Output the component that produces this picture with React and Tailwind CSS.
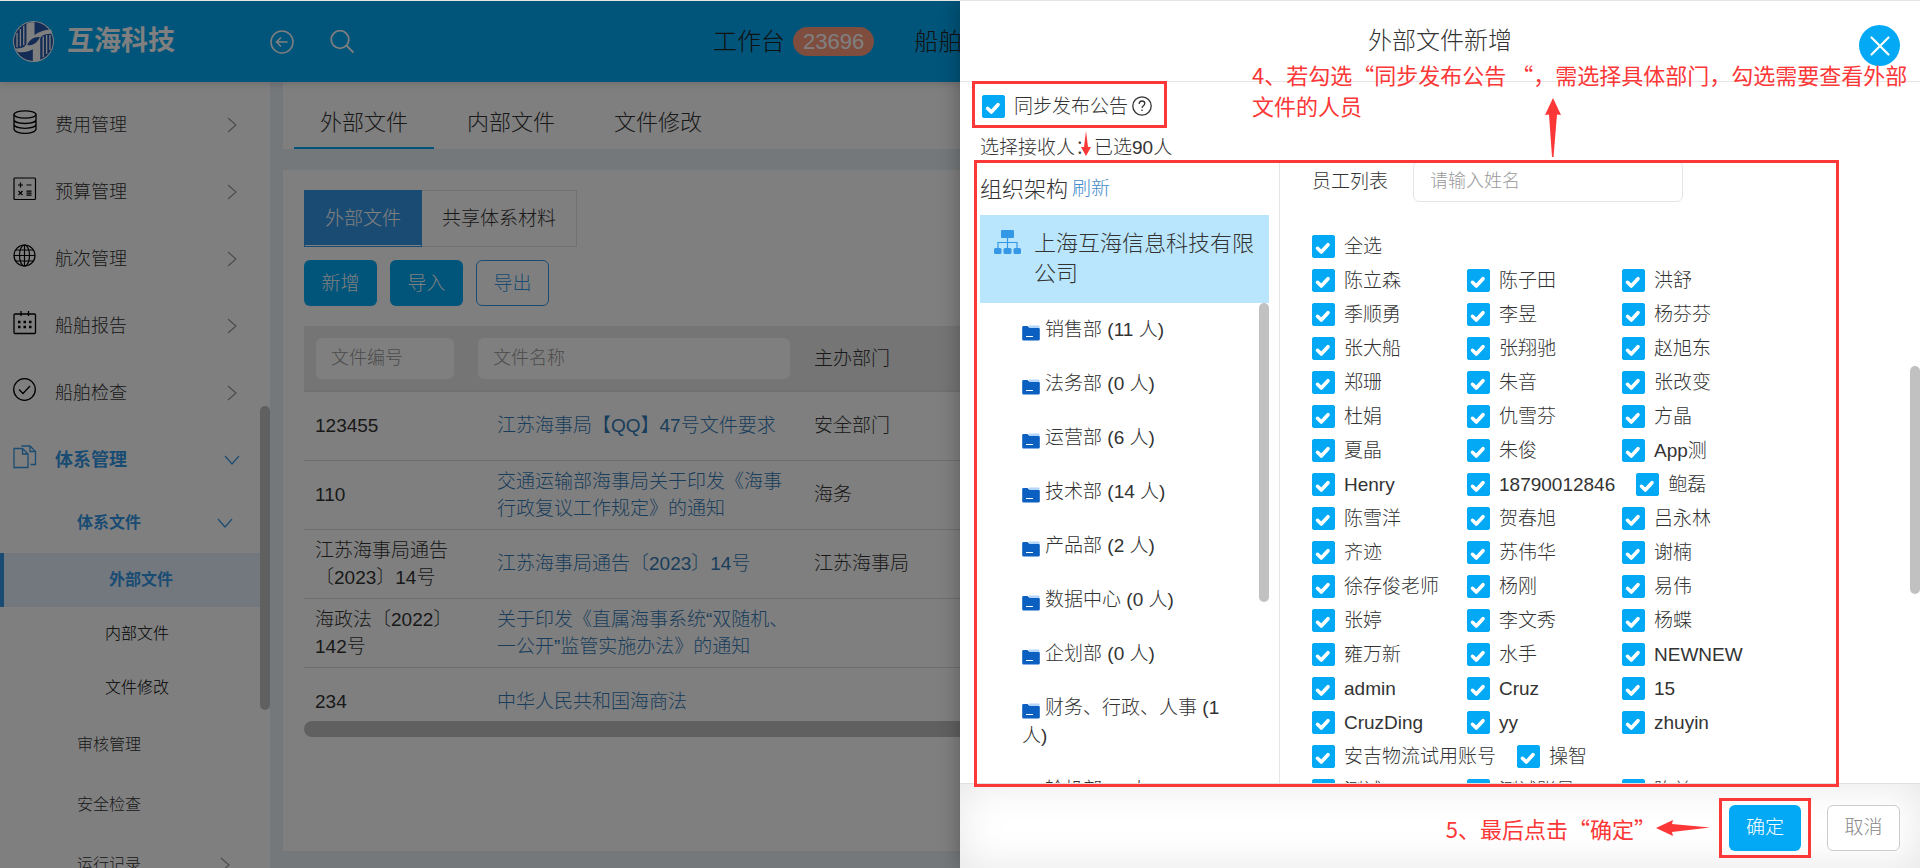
import { useState } from 'react';
import { X } from 'lucide-react';

const MENU = [
  { label: '费用管理', icon: DatabaseIcon },
  { label: '预算管理', icon: CalculatorIcon },
  { label: '航次管理', icon: GlobeIcon },
  { label: '船舶报告', icon: CalendarIcon },
  { label: '船舶检查', icon: CheckCircleIcon },
];

const FILES = [
  { no: '123455', name: '江苏海事局【QQ】47号文件要求', dept: '安全部门' },
  { no: '110', name: '交通运输部海事局关于印发《海事行政复议工作规定》的通知', dept: '海务' },
  { no: '江苏海事局通告〔2023〕14号', name: '江苏海事局通告〔2023〕14号', dept: '江苏海事局' },
  { no: '海政法〔2022〕142号', name: '关于印发《直属海事系统“双随机、一公开”监管实施办法》的通知', dept: '' },
  { no: '234', name: '中华人民共和国海商法', dept: '' },
];

const DEPARTMENTS = [
  { name: '销售部', count: 11 },
  { name: '法务部', count: 0 },
  { name: '运营部', count: 6 },
  { name: '技术部', count: 14 },
  { name: '产品部', count: 2 },
  { name: '数据中心', count: 0 },
  { name: '企划部', count: 0 },
  { name: '财务、行政、人事', count: 1 },
  { name: '轮机部', count: 0 },
];

const EMPLOYEES = [
  '陈立森', '陈子田', '洪舒',
  '季顺勇', '李昱', '杨芬芬',
  '张大船', '张翔驰', '赵旭东',
  '郑珊', '朱音', '张改变',
  '杜娟', '仇雪芬', '方晶',
  '夏晶', '朱俊', 'App测',
  'Henry', '18790012846', '鲍磊',
  '陈雪洋', '贺春旭', '吕永林',
  '齐迹', '苏伟华', '谢楠',
  '徐存俊老师', '杨刚', '易伟',
  '张婷', '李文秀', '杨蝶',
  '雍万新', '水手', 'NEWNEW',
  'admin', 'Cruz', '15',
  'CruzDing', 'yy', 'zhuyin',
  '安吉物流试用账号', '操智',
  '测试', '测试账号', '陈益',
];

function Logo() {
  return (
    <svg viewBox="0 0 122 122" className="size-[41px]">
      <circle cx="61" cy="61" r="61" fill="#fff" />
      <circle cx="61" cy="61" r="58" fill="#2458ac" />
      <path d="M40 8C50 3 58 3 64 4V42C78 32 92 26 114 26L117 38C98 38 84 42 81 52V118C74 120 66 120 59 119V84C46 92 30 94 14 92L6 82C24 82 38 78 40 66Z" fill="#fff" />
      <path d="M42 72C50 54 64 46 80 48C74 62 60 74 42 72Z" fill="#2458ac" />
      <path d="M32 14V72M22 24V76M12 36V78M90 46V108M100 42V98M110 42V86" stroke="#fff" strokeWidth="4" fill="none" />
    </svg>
  );
}

function DatabaseIcon() {
  return (
    <svg viewBox="0 0 24 24" className="size-6" fill="none" stroke="currentColor" strokeWidth="1.3">
      <ellipse cx="12" cy="4.5" rx="11" ry="3.7" />
      <path d="M1 4.500V19C1 21.500 6 23.300 12 23.300S23 21.500 23 19V4.500M1 9.500C1 12 6 13.500 12 13.500S23 12 23 9.500M1 14.300C1 16.800 6 18.300 12 18.300S23 16.800 23 14.300" />
    </svg>
  );
}

function CalculatorIcon() {
  return (
    <svg viewBox="0 0 24 24" className="size-6" fill="none" stroke="currentColor" strokeWidth="1.2">
      <rect x="1" y="1" width="21.500" height="21.500" rx="1" />
      <path d="M5 8H10M7.500 5.500V10.500M13.500 8H18.500M5.500 14L9.500 18M9.500 14L5.500 18M13.500 14.200H18.500M13.500 16.200H18.500M13.500 18.200H18.500" />
    </svg>
  );
}

function GlobeIcon() {
  return (
    <svg viewBox="0 0 24 24" className="size-6" fill="none" stroke="currentColor" strokeWidth="1.2">
      <circle cx="11.500" cy="11.500" r="10.500" />
      <ellipse cx="11.500" cy="11.500" rx="5" ry="10.500" />
      <path d="M1 11.500H22M11.500 1V22M3 6H20M3 17H20" />
    </svg>
  );
}

function CalendarIcon() {
  return (
    <svg viewBox="0 0 24 24" className="size-6" fill="none" stroke="currentColor" strokeWidth="1.3">
      <rect x="1" y="3" width="21.500" height="19.500" rx="1" />
      <path d="M8 0V5M15.500 0V5" />
      <path d="M5 11H7.500M10.500 11H13M16 11H18.500M5 16H7.500M10.500 16H13M16 16H18.500" strokeWidth="2.400" />
    </svg>
  );
}

function CheckCircleIcon() {
  return (
    <svg viewBox="0 0 24 24" className="size-6" fill="none" stroke="currentColor" strokeWidth="1.3">
      <circle cx="11.500" cy="11.500" r="10.800" />
      <path d="M6 11.500L10 15.500L17 8" />
    </svg>
  );
}

function FilesIcon() {
  return (
    <svg viewBox="0 0 24 24" className="size-6" fill="none" stroke="currentColor" strokeWidth="1.3">
      <path d="M1 3.500H9.500L15 9V22.500H1ZM9.500 3.500V9H15" />
      <path d="M8.500 1H17L22.500 6.500V19.500H17.500M17 1V6.500H22.500" />
    </svg>
  );
}

function ChevronRight() {
  return (
    <svg viewBox="0 0 16 16" className="size-4 text-[#999]" fill="none" stroke="currentColor" strokeWidth="1.2">
      <path d="M4 1L12 8L4 15" />
    </svg>
  );
}

function ChevronDown() {
  return (
    <svg viewBox="0 0 16 16" className="size-4 text-[#3498e6]" fill="none" stroke="currentColor" strokeWidth="1.2">
      <path d="M1 4L8 12L15 4" />
    </svg>
  );
}

function FolderIcon() {
  return (
    <svg viewBox="0 0 18 16" className="mr-[5px] inline h-4 w-[18px] align-[-5px]">
      <path d="M7 0.500H16.500Q17.500 0.500 17.500 1.500V5H7Z" fill="#b5d6fb" />
      <path d="M1.500 1H5.500L7.500 3H16.500Q17.800 3 17.800 4.300V14Q17.800 15.500 16.500 15.500H1.500Q0.200 15.500 0.200 14V2.300Q0.200 1 1.500 1Z" fill="#0b5fc0" />
      <path d="M4 11.500H11" stroke="#fff" strokeWidth="1" />
    </svg>
  );
}

function OrgIcon() {
  return (
    <svg viewBox="0 0 27 24" className="mt-[15px] h-6 w-[27px] shrink-0" fill="#3498e6">
      <rect x="7" y="0" width="13" height="8" rx="1" />
      <path d="M13.500 8V18M4 18V12.500H23V18" fill="none" stroke="#3498e6" strokeWidth="1.2" />
      <rect x="0" y="18" width="7.500" height="6" rx="1.500" />
      <rect x="9.500" y="18" width="8" height="6" rx="1.500" />
      <rect x="19.500" y="18" width="7.500" height="6" rx="1.500" />
    </svg>
  );
}

function Checkbox({ label, checked, onChange, className = '' }) {
  return (
    <label className={`flex items-center gap-[9px] text-[19px] text-[#333] ${className}`}>
      <span className="relative size-[23px] shrink-0">
        <input
          type="checkbox"
          checked={checked}
          onChange={onChange}
          className="block size-[23px] appearance-none rounded-[2px] border border-[#ccc] checked:border-[#03a9f4] checked:bg-[#03a9f4]"
        />
        {checked && (
          <svg viewBox="0 0 23 23" className="pointer-events-none absolute inset-0 size-[23px]">
            <path d="M5.500 13.300L9.300 17L16 9.700" fill="none" stroke="#fff" strokeWidth="3.600" strokeLinecap="round" strokeLinejoin="round" />
          </svg>
        )}
      </span>
      <span className="pt-[3px]">{label}</span>
    </label>
  );
}

function TopBar() {
  return (
    <header className="relative z-10 flex h-[81px] shrink-0 items-center bg-[#03a9f4] shadow-[0_2px_8px_rgba(0,0,0,0.15)]">
      <div className="flex w-[270px] items-center gap-[13px] pl-[13px]">
        <Logo />
        <span className="text-[27px] font-bold text-white">互海科技</span>
      </div>
      <div className="flex w-[443px] gap-9 text-white">
        <button aria-label="返回">
          <svg viewBox="0 0 24 24" className="size-6" fill="none" stroke="currentColor" strokeWidth="1.5">
            <circle cx="12" cy="12" r="11" />
            <path d="M17.500 12H6.500M11 7.500L6.500 12L11 16.500" />
          </svg>
        </button>
        <button aria-label="搜索">
          <svg viewBox="0 0 24 24" className="size-6" fill="none" stroke="currentColor" strokeWidth="1.800">
            <circle cx="10" cy="9.500" r="8.800" />
            <path d="M16.500 15.500L23.500 22.500" />
          </svg>
        </button>
      </div>
      <nav className="flex items-center gap-10 text-2xl whitespace-nowrap text-[#222]">
        <a href="#workbench" className="flex items-center gap-2">
          工作台
          <span className="flex h-[29px] items-center rounded-full bg-[#ff9a7c] px-[10px] text-[22px] text-white">23696</span>
        </a>
        <a href="#ships">船舶管理</a>
      </nav>
    </header>
  );
}

function Sidebar() {
  return (
    <aside className="flex w-[270px] shrink-0 overflow-hidden bg-white text-[#333]">
      <nav className="w-[260px] pt-[9px] text-lg">
        {MENU.map(({ label, icon: Icon }) => (
          <a key={label} href={`#${label}`} className="flex h-[67px] items-center pr-5 pl-[13px]">
            <span className="mb-1.5 text-black"><Icon /></span>
            <span className="ml-[18px] flex-1">{label}</span>
            <ChevronRight />
          </a>
        ))}
        <a href="#system" className="flex h-[67px] items-center pr-5 pl-[13px] text-[#3498e6]">
          <span className="mb-1.5"><FilesIcon /></span>
          <span className="ml-[18px] flex-1 font-bold">体系管理</span>
          <ChevronDown />
        </a>
        <div className="text-base">
          <a href="#system-files" className="flex h-[60px] items-center justify-between pr-[27px] pl-[77px] font-bold text-[#3498e6]">
            体系文件
            <ChevronDown />
          </a>
          <a href="#external" className="flex h-[54px] items-center border-l-4 border-[#3498e6] bg-[#e6f0ff] pl-[105px] font-bold text-[#3498e6]">
            外部文件
          </a>
          <a href="#internal" className="flex h-[54px] items-center pl-[105px] text-black">内部文件</a>
          <a href="#changes" className="flex h-[54px] items-center pl-[105px] text-black">文件修改</a>
          <a href="#audit" className="flex h-[60px] items-center pl-[77px]">审核管理</a>
          <a href="#safety" className="flex h-[60px] items-center pl-[77px]">安全检查</a>
          <a href="#records" className="flex h-[60px] items-center justify-between pr-[27px] pl-[77px]">
            运行记录
            <ChevronRight />
          </a>
        </div>
      </nav>
      <div className="mt-[324px] h-[304px] w-[10px] rounded-full bg-[#c1c1c1]" />
    </aside>
  );
}

function FileTable() {
  return (
    <div className="mt-5">
      <div className="max-h-[395px] overflow-hidden">
        <table className="w-full table-fixed text-left text-[19px] leading-[27px] text-[#333]">
          <thead className="border-b-2 border-[#e2e2e2] bg-[#ebebeb]">
            <tr className="h-[65px]">
              <th className="w-[162px] px-3 font-light">
                <input aria-label="文件编号" placeholder="文件编号" className="h-[41px] w-full rounded-md bg-white px-[15px] text-lg placeholder:text-[#999]" />
              </th>
              <th className="w-[336px] px-3 font-light">
                <input aria-label="文件名称" placeholder="文件名称" className="h-[41px] w-full rounded-md bg-white px-[15px] text-lg placeholder:text-[#999]" />
              </th>
              <th className="px-3 font-light">主办部门</th>
            </tr>
          </thead>
          <tbody>
            {FILES.map((file) => (
              <tr key={file.no} className="h-[69px] border-b border-[#ddd]">
                <td className="pr-2 pl-[11px]">{file.no}</td>
                <td className="pr-2 pl-[31px]">
                  <a href="#detail" className="text-[#337ab7]">{file.name}</a>
                </td>
                <td className="px-3">{file.dept}</td>
              </tr>
            ))}
          </tbody>
        </table>
      </div>
      <div className="h-4 rounded-full bg-[#c1c1c1]" />
    </div>
  );
}

function Workspace() {
  return (
    <main className="flex min-w-0 flex-1 flex-col gap-[21px] bg-[#ebf0f5] pb-[17px] pl-[13px]">
      <nav className="flex gap-[7px] bg-white px-[11px] text-[22px] text-[#333]">
        <a href="#external" className="flex h-[67px] w-[140px] items-center justify-center border-b-2 border-[#03a9f4] pt-4">外部文件</a>
        <a href="#internal" className="flex h-[67px] w-[140px] items-center justify-center border-b-2 border-transparent pt-4">内部文件</a>
        <a href="#changes" className="flex h-[67px] w-[140px] items-center justify-center border-b-2 border-transparent pt-4">文件修改</a>
      </nav>
      <section className="flex-1 bg-white px-[21px] pt-5">
        <div className="flex h-[57px] text-[19px]">
          <button className="border border-[#3498e6] bg-[#3498e6] px-5 pt-0.5 text-white shadow-[inset_0_-1px_0_#fff]">外部文件</button>
          <button className="border border-l-0 border-[#e5e5e5] px-5 pt-0.5 text-[#333]">共享体系材料</button>
        </div>
        <div className="mt-[13px] flex gap-[13px] text-[19px]">
          <button className="h-[46px] w-[73px] rounded-md bg-[#03a9f4] pt-0.5 text-white">新增</button>
          <button className="h-[46px] w-[73px] rounded-md bg-[#03a9f4] pt-0.5 text-white">导入</button>
          <button className="h-[46px] w-[73px] rounded-md border border-[#3498e6] pt-0.5 text-[#3498e6]">导出</button>
        </div>
        <FileTable />
      </section>
    </main>
  );
}

function OrgTree() {
  return (
    <div className="w-80 shrink-0 border-r border-[#e5e5e5] pr-[10px] pl-5">
      <div className="flex h-[54px] items-center gap-1 pt-0.5 text-[22px] text-[#333]">
        组织架构
        <a href="#refresh" className="text-[19px] text-[#428bca]">刷新</a>
      </div>
      <div className="flex gap-[13px] bg-[#b9e6fc] pl-[14px] text-[22px] leading-[30px] text-[#333]">
        <OrgIcon />
        <span className="py-[14px] pr-2">上海互海信息科技有限公司</span>
      </div>
      <div className="flex">
        <ul className="flex-1 text-[19px] leading-[28px] text-[#333]">
          {DEPARTMENTS.map((dept) => (
            <li key={dept.name} className="py-[13px] pr-5 pl-[42px]">
              <FolderIcon />
              {dept.name} ({dept.count} 人)
            </li>
          ))}
        </ul>
        <div className="h-[299px] w-[10px] rounded-full bg-[#c1c1c1]" />
      </div>
    </div>
  );
}

function EmployeeList({ selected, onToggle, onToggleAll }) {
  return (
    <div className="flex-1 pr-[110px] pl-8">
      <div className="flex items-center gap-[25px]">
        <label htmlFor="employee" className="pt-0.5 text-[19px] text-[#333]">员工列表</label>
        <input id="employee" placeholder="请输入姓名" className="h-[41px] w-[270px] rounded-md border border-[#e5e5e5] px-4 text-lg placeholder:text-[#999]" />
      </div>
      <Checkbox
        label="全选"
        checked={selected.length === EMPLOYEES.length}
        onChange={onToggleAll}
        className="mt-[27px] h-[34px]"
      />
      <div className="flex flex-wrap">
        {EMPLOYEES.map((name) => (
          <Checkbox
            key={name}
            label={name}
            checked={selected.includes(name)}
            onChange={() => onToggle(name)}
            className="h-[34px] min-w-[155px] pr-[21px]"
          />
        ))}
      </div>
    </div>
  );
}

function Drawer() {
  const [publish, setPublish] = useState(true);
  const [selected, setSelected] = useState(EMPLOYEES);

  const toggle = (name) => {
    setSelected((prev) => (prev.includes(name) ? prev.filter((n) => n !== name) : [...prev, name]));
  };
  const toggleAll = () => {
    setSelected((prev) => (prev.length === EMPLOYEES.length ? [] : EMPLOYEES));
  };

  return (
    <div role="dialog" aria-label="外部文件新增" className="absolute inset-y-0 right-0 z-30 flex w-1/2 flex-col bg-white shadow-[0_0_20px_rgba(0,0,0,0.3)]">
      <div className="flex h-[81px] shrink-0 items-center justify-center border-b border-[#e5e5e5]">
        <h2 className="text-2xl text-[#333]">外部文件新增</h2>
        <button aria-label="关闭" className="absolute top-6 right-5 flex size-[41px] items-center justify-center rounded-full bg-[#03a9f4] text-white">
          <X className="size-[34px]" strokeWidth={1.5} />
        </button>
      </div>

      <div className="flex min-h-0 flex-1 flex-col overflow-hidden">
        <div className="mt-[10px] flex shrink-0 items-center gap-1 pl-[22px]">
          <Checkbox label="同步发布公告" checked={publish} onChange={() => setPublish(!publish)} className="h-7" />
          <svg viewBox="0 0 20 20" className="size-5 text-[#333]" fill="none" stroke="currentColor" strokeWidth="1.300">
            <circle cx="10" cy="10" r="9.200" />
            <path d="M7.200 8C7.200 6 8.400 5 10 5S12.800 6 12.800 7.600C12.800 9.600 10 9.800 10 12M10 13.500V15" />
          </svg>
        </div>
        <p className="mt-[15px] shrink-0 pl-5 text-[19px] leading-[26px] text-[#333]">选择接收人：已选90人</p>
        <div className="flex min-h-0 flex-1 overflow-hidden">
          <OrgTree />
          <EmployeeList selected={selected} onToggle={toggle} onToggleAll={toggleAll} />
        </div>
      </div>

      <div className="flex h-[85px] shrink-0 items-center justify-end border-t border-[#e0e0e0] pt-1 pr-5 text-[19px] shadow-[inset_0_0_40px_rgba(0,0,0,0.1)]">
        <span className="text-[22px] font-normal text-[#fb3737] [font-family:'Noto_Sans_CJK_SC',sans-serif]">5、最后点击“确定”</span>
        <svg viewBox="0 0 54 16" className="h-4 w-[54px]" fill="#fb3737">
          <path d="M0 8L17 0L16 4L54 7.500L16 12L17 16Z" />
        </svg>
        <div className="mx-[9px] border-3 border-[#fb3737] px-[7px] py-1">
          <button className="h-[46px] w-[72px] rounded-md bg-[#03a9f4] text-white">确定</button>
        </div>
        <button className="ml-[7px] h-[46px] w-[73px] rounded-md border border-[#ccc] bg-white text-[#888]">取消</button>
      </div>

      {/* scrollbar thumb of the drawer body */}
      <div className="absolute top-[365px] right-0 h-[228px] w-[10px] rounded-full bg-[#c1c1c1]" />

      {/* step marks */}
      <div className="pointer-events-none absolute top-20 left-3 h-[47px] w-[195px] border-3 border-[#fb3737]" />
      <div className="pointer-events-none absolute top-[159px] right-[81px] bottom-[81px] left-[14px] border-3 border-[#fb3737]" />
      <svg viewBox="0 0 10 25" className="absolute top-[130px] left-[121px] h-[25px] w-[10px]" fill="#fb3737">
        <path d="M5 0L7 16H10L5 25L0 16H3Z" />
      </svg>
      <svg viewBox="0 0 16 59" className="absolute top-[97px] left-[585px] h-[59px] w-4" fill="#fb3737">
        <path d="M8 0L16 17L12 16.500L8.500 59H7L4 16.500L0 17Z" />
      </svg>
      <p className="absolute top-[58px] left-[292px] text-[22px] leading-[31px] font-normal whitespace-nowrap text-[#fb3737] [font-family:'Noto_Sans_CJK_SC',sans-serif]">
        4、若勾选“同步发布公告 “，需选择具体部门，勾选需要查看外部
        <br />
        文件的人员
      </p>
    </div>
  );
}

export default function App() {
  return (
    <div className="relative flex h-screen flex-col overflow-hidden border-t border-[#e5e5e5] font-light [font-family:'Liberation_Sans','Noto_Sans_CJK_SC',sans-serif]">
      <TopBar />
      <div className="flex min-h-0 flex-1">
        <Sidebar />
        <Workspace />
      </div>
      <div className="absolute inset-0 z-20 bg-black/50" />
      <Drawer />
    </div>
  );
}
